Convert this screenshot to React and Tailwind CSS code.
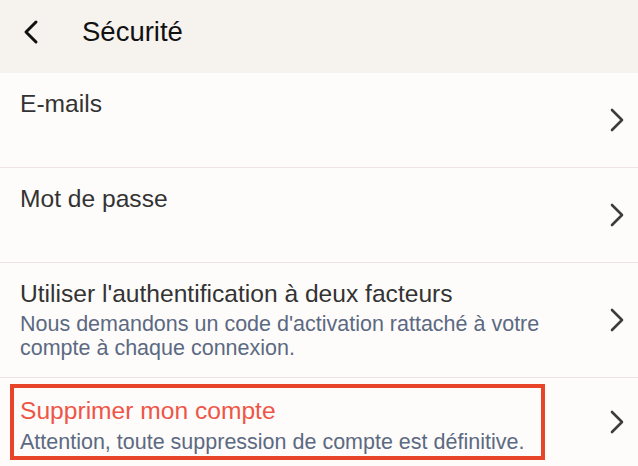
import React from 'react';

function Chevron({ className }) {
  return (
    <svg width="14" height="24" viewBox="0 0 14 24" fill="none" className={className}>
      <path d="M2 2 L12 12 L2 22" stroke="currentColor" strokeWidth="2.6" strokeLinecap="round" strokeLinejoin="round" />
    </svg>
  );
}

function BackChevron() {
  return (
    <svg width="16" height="26" viewBox="0 0 16 26" fill="none" className="text-[#111]">
      <path d="M13 3 L3 13 L13 23" stroke="currentColor" strokeWidth="3" strokeLinecap="round" strokeLinejoin="round" />
    </svg>
  );
}

const rows = [
  { title: 'E-mails' },
  { title: 'Mot de passe' },
  {
    title: "Utiliser l'authentification à deux facteurs",
    subtitle: "Nous demandons un code d'activation rattaché à votre compte à chaque connexion.",
  },
];

function Row({ title, subtitle }) {
  return (
    <div className="flex items-center min-h-[95px] border-b border-[#efe4e1] pl-5 pr-[14px] pt-4 pb-[17px]">
      <div className="flex-1 self-start">
        <div className="text-[24.6px] leading-[30px] text-[#333333]">{title}</div>
        {subtitle && (
          <div className="mt-[3px] w-[530px] text-[21.5px] leading-[24px] text-[#5c6982]">{subtitle}</div>
        )}
      </div>
      <Chevron className="text-[#3c3c3c]" />
    </div>
  );
}

export default function App() {
  return (
    <div className="w-[638px] h-[466px] overflow-hidden bg-[#fdfcfa]" style={{ fontFamily: '"Liberation Sans", Arial, sans-serif' }}>
      {/* Header */}
      <div className="flex items-center h-[73px] bg-[#f6f2ee] pl-[23px] pb-[9px]">
        <BackChevron />
        <h1 className="ml-[43px] text-[27.5px] leading-[32px] text-[#111111]">Sécurité</h1>
      </div>

      {rows.map((row) => (
        <Row key={row.title} {...row} />
      ))}

      {/* Delete account */}
      <div className="flex items-center pl-[10px] pr-[14px] pt-[6px] pb-4">
        <div className="flex-1">
          <div className="w-[535px] border-4 border-[#e8442a] pl-[6px] pt-2 pb-[2px]">
            <div className="text-[24.6px] leading-[30px] text-[#ee5547]">Supprimer mon compte</div>
            <div className="mt-1 text-[21.5px] leading-[24px] text-[#5c6982]">
              Attention, toute suppression de compte est définitive.
            </div>
          </div>
        </div>
        <Chevron className="text-[#3c3c3c]" />
      </div>
    </div>
  );
}
